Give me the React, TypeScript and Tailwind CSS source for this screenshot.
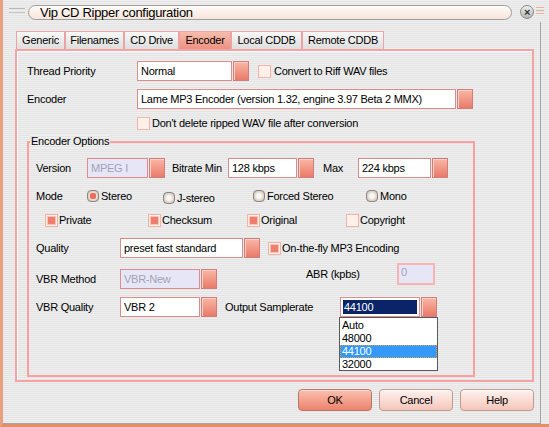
import clsx from 'clsx'
import type { ReactNode } from 'react'

const stripes =
  'bg-[repeating-linear-gradient(to_bottom,#efefef_0px,#efefef_1px,#e4e4e4_1px,#e4e4e4_2px)]'

function DropBtn() {
  return (
    <div className="h-full w-[16px] shrink-0 border border-[#d27c7c] bg-gradient-to-b from-[#f9b6a6] to-[#e97a68] shadow-[inset_1px_1px_0_#fcd2c6]" />
  )
}

function Combo({
  value,
  width,
  disabled,
  selected,
  children,
}: {
  value: string
  width: string
  disabled?: boolean
  selected?: boolean
  children?: ReactNode
}) {
  return (
    <div className="relative flex h-[20px] shrink-0 gap-[1px]">
      <div
        className={clsx(
          'flex shrink-0 items-center border border-[#dc8c8c]',
          width,
          selected ? 'p-[2px]' : 'px-[3px]',
          disabled ? 'bg-[#e6e6f6] text-[#a2a2b6]' : 'bg-white text-black'
        )}
      >
        {selected ? (
          <span className="flex h-full w-full items-center bg-[#0a246a] px-[1px] text-white">{value}</span>
        ) : (
          value
        )}
      </div>
      <DropBtn />
      {children}
    </div>
  )
}

function Check({ checked }: { checked?: boolean }) {
  return (
    <span className="flex h-[13px] w-[13px] shrink-0 items-center justify-center border border-[#f6b2a2] bg-[#fff1ea]">
      {checked && <span className="h-[7px] w-[7px] bg-[#f07e6e] shadow-[0_0_0_1px_#f9c4b6]" />}
    </span>
  )
}

function Radio({ checked }: { checked?: boolean }) {
  return (
    <span className="flex h-[12px] w-[12px] shrink-0 items-center justify-center rounded-[4px] border border-[#8e867e] bg-[radial-gradient(circle,#faf6f2_30%,#bcb2a8_100%)]">
      {checked && <span className="h-[6px] w-[6px] rounded-[2px] bg-[#ee6c5c]" />}
    </span>
  )
}

const tabs = [
  { name: 'Generic', w: 'w-[49px]' },
  { name: 'Filenames', w: 'w-[59px]' },
  { name: 'CD Drive', w: 'w-[55px]' },
  { name: 'Encoder', w: 'w-[52px]', active: true },
  { name: 'Local CDDB', w: 'w-[71px]' },
  { name: 'Remote CDDB', w: 'w-[82px]' },
]

export default function App() {
  return (
    <div
      className={clsx(
        'flex h-[427px] w-[549px] flex-col overflow-hidden border-b-[3px] border-l-[3px] border-b-[#e28e6a] border-l-[#e9a080] font-[Liberation_Sans,Arial,sans-serif] text-[11px] tracking-[-0.25px] text-black',
        stripes
      )}
    >
      {/* title bar */}
      <div className="flex h-[22px] shrink-0 items-start pt-[5px]">
        <div className="flex w-[25px] flex-col gap-[3px] pt-[3px] pl-[6px]">
          <span className="h-px w-[16px] bg-[#b8b8b8]" />
          <span className="h-px w-[16px] bg-[#c8c8c8]" />
        </div>
        <div className="flex h-[15px] w-[484px] items-center rounded-full border border-[#9c9c9c] bg-gradient-to-b from-[#fffaf6] to-[#f6e6dc] pl-[11px] text-[13px] tracking-[-0.3px] shadow-[inset_0_1px_0_#ffffff]">
          Vip CD Ripper configuration
        </div>
        <div className="ml-[8px] flex h-[14px] w-[14px] items-center justify-center rounded-full border border-[#8a8a8a] bg-gradient-to-b from-[#f0f0f0] to-[#b4b4b4] text-[11px] font-bold leading-none text-[#333]">
          ×
        </div>
        <div className="ml-[2px] flex flex-col gap-[2px] pt-[2px]">
          <span className="h-px w-[8px] bg-[#e8b0a0]" />
          <span className="h-px w-[8px] bg-[#e8b0a0]" />
          <span className="h-px w-[8px] bg-[#e8b0a0]" />
        </div>
      </div>

      {/* body */}
      <div className="flex h-[402px] w-[538px] shrink-0 flex-col border-r border-b border-[#a4a4a4]">
        <div className="flex pt-[9px] pl-[13px]">
          {tabs.map((t) => (
            <div
              key={t.name}
              className={clsx(
                'flex h-[18px] items-center justify-center border border-b-0 border-[#eaa2a2]',
                t.w,
                t.active
                  ? 'bg-gradient-to-b from-[#f9bcac] to-[#ec9282]'
                  : 'bg-gradient-to-b from-[#f8f8f8] to-[#dedede]'
              )}
            >
              {t.name}
            </div>
          ))}
        </div>

        {/* tab panel */}
        <div className="ml-[12px] flex h-[333px] w-[519px] flex-col border-2 border-[#f6a2a2] shadow-[inset_1px_1px_0_#ffffff]">
          <div className="mt-[10px] flex h-[20px] items-center pl-[10px]">
            <span className="w-[110px] shrink-0">Thread Priority</span>
            <Combo value="Normal" width="w-[95px]" />
            <span className="ml-[9px] flex items-center gap-[3px]">
              <Check />
              Convert to Riff WAV files
            </span>
          </div>
          <div className="mt-[8px] flex h-[20px] items-center pl-[10px]">
            <span className="w-[110px] shrink-0">Encoder</span>
            <Combo value="Lame MP3 Encoder (version 1.32, engine 3.97 Beta 2 MMX)" width="w-[319px]" />
          </div>
          <div className="mt-[8px] flex h-[13px] items-center gap-[2px] pl-[120px]">
            <Check />
            Don't delete ripped WAV file after conversion
          </div>

          {/* Encoder Options group */}
          <div className="relative mt-[11px] ml-[10px] flex h-[236px] w-[448px] flex-col border-2 border-[#ff9e9e] pl-[7px]">
            <span className={clsx('absolute -top-[8px] left-[1px] px-[1px] leading-[13px]', stripes)}>
              Encoder Options
            </span>

            <div className="mt-[15px] flex h-[20px] items-center">
              <span className="w-[51px] shrink-0">Version</span>
              <Combo value="MPEG I" width="w-[61px]" disabled />
              <span className="ml-[7px] w-[56px] shrink-0">Bitrate Min</span>
              <Combo value="128 kbps" width="w-[69px]" />
              <span className="ml-[9px] w-[35px] shrink-0">Max</span>
              <Combo value="224 kbps" width="w-[73px]" />
            </div>

            <div className="mt-[11px] flex h-[14px] items-center">
              <span className="w-[51px] shrink-0">Mode</span>
              <span className="flex w-[76px] items-center gap-[2px]">
                <Radio checked />
                Stereo
              </span>
              <span className="flex w-[90px] translate-y-[2px] items-center gap-[2px]">
                <Radio />
                J-stereo
              </span>
              <span className="flex w-[113px] items-center gap-[2px]">
                <Radio />
                Forced Stereo
              </span>
              <span className="flex items-center gap-[2px]">
                <Radio />
                Mono
              </span>
            </div>

            <div className="mt-[10px] ml-[9px] flex h-[14px] items-center">
              <span className="flex w-[103px] items-center gap-[1px]">
                <Check checked />
                Private
              </span>
              <span className="flex w-[99px] items-center gap-[1px]">
                <Check checked />
                Checksum
              </span>
              <span className="flex w-[99px] items-center gap-[1px]">
                <Check checked />
                Original
              </span>
              <span className="flex items-center gap-[1px]">
                <Check />
                Copyright
              </span>
            </div>

            <div className="mt-[11px] flex h-[20px] items-center">
              <span className="w-[84px] shrink-0">Quality</span>
              <Combo value="preset fast standard" width="w-[123px]" />
              <span className="ml-[8px] flex items-center gap-[1px]">
                <Check checked />
                On-the-fly MP3 Encoding
              </span>
            </div>

            <div className="mt-[11px] flex h-[20px] items-center">
              <span className="w-[84px] shrink-0">VBR Method</span>
              <Combo value="VBR-New" width="w-[80px]" disabled />
              <div className="-mt-[6px] ml-[89px] flex h-[22px] items-center self-start">
                <span className="w-[91px] shrink-0">ABR (kpbs)</span>
                <div className="h-[22px] w-[38px] border-2 border-[#f6b4b4] bg-[#e6e6f6] px-[2px] leading-[14px] text-[#a2a2b6]">
                  0
                </div>
              </div>
            </div>

            <div className="mt-[8px] flex h-[20px] items-center">
              <span className="w-[84px] shrink-0">VBR Quality</span>
              <Combo value="VBR 2" width="w-[80px]" />
              <span className="ml-[8px] w-[115px] shrink-0">Output Samplerate</span>
              <Combo value="44100" width="w-[80px]" selected>
                <div className="absolute top-full left-[-1px] z-10 flex h-[54px] w-[99px] flex-col border border-[#5a5a5a] bg-white py-[1px] leading-[13px]">
                  <span className="h-[13px] px-[2px]">Auto</span>
                  <span className="h-[13px] px-[2px]">48000</span>
                  <span className="h-[13px] bg-[#3399ff] px-[2px] text-white outline-1 -outline-offset-1 outline-[#e8a040] outline-dotted">
                    44100
                  </span>
                  <span className="h-[13px] px-[2px]">32000</span>
                </div>
              </Combo>
            </div>
          </div>
        </div>

        {/* buttons */}
        <div className="mt-[7px] ml-[12px] flex w-[519px] justify-end gap-[7px]">
          <button className="h-[22px] w-[74px] rounded-[4px] border border-[#b87868] bg-gradient-to-b from-[#fac0b0] to-[#ec826e] shadow-[inset_0_1px_0_#fde0d8]">
            OK
          </button>
          <button className="h-[22px] w-[74px] rounded-[4px] border border-[#c49a90] bg-gradient-to-b from-[#fef2ee] to-[#f4c6ba] shadow-[inset_0_1px_0_#ffffff]">
            Cancel
          </button>
          <button className="h-[22px] w-[74px] rounded-[4px] border border-[#c49a90] bg-gradient-to-b from-[#fef2ee] to-[#f4c6ba] shadow-[inset_0_1px_0_#ffffff]">
            Help
          </button>
        </div>
      </div>
    </div>
  )
}
